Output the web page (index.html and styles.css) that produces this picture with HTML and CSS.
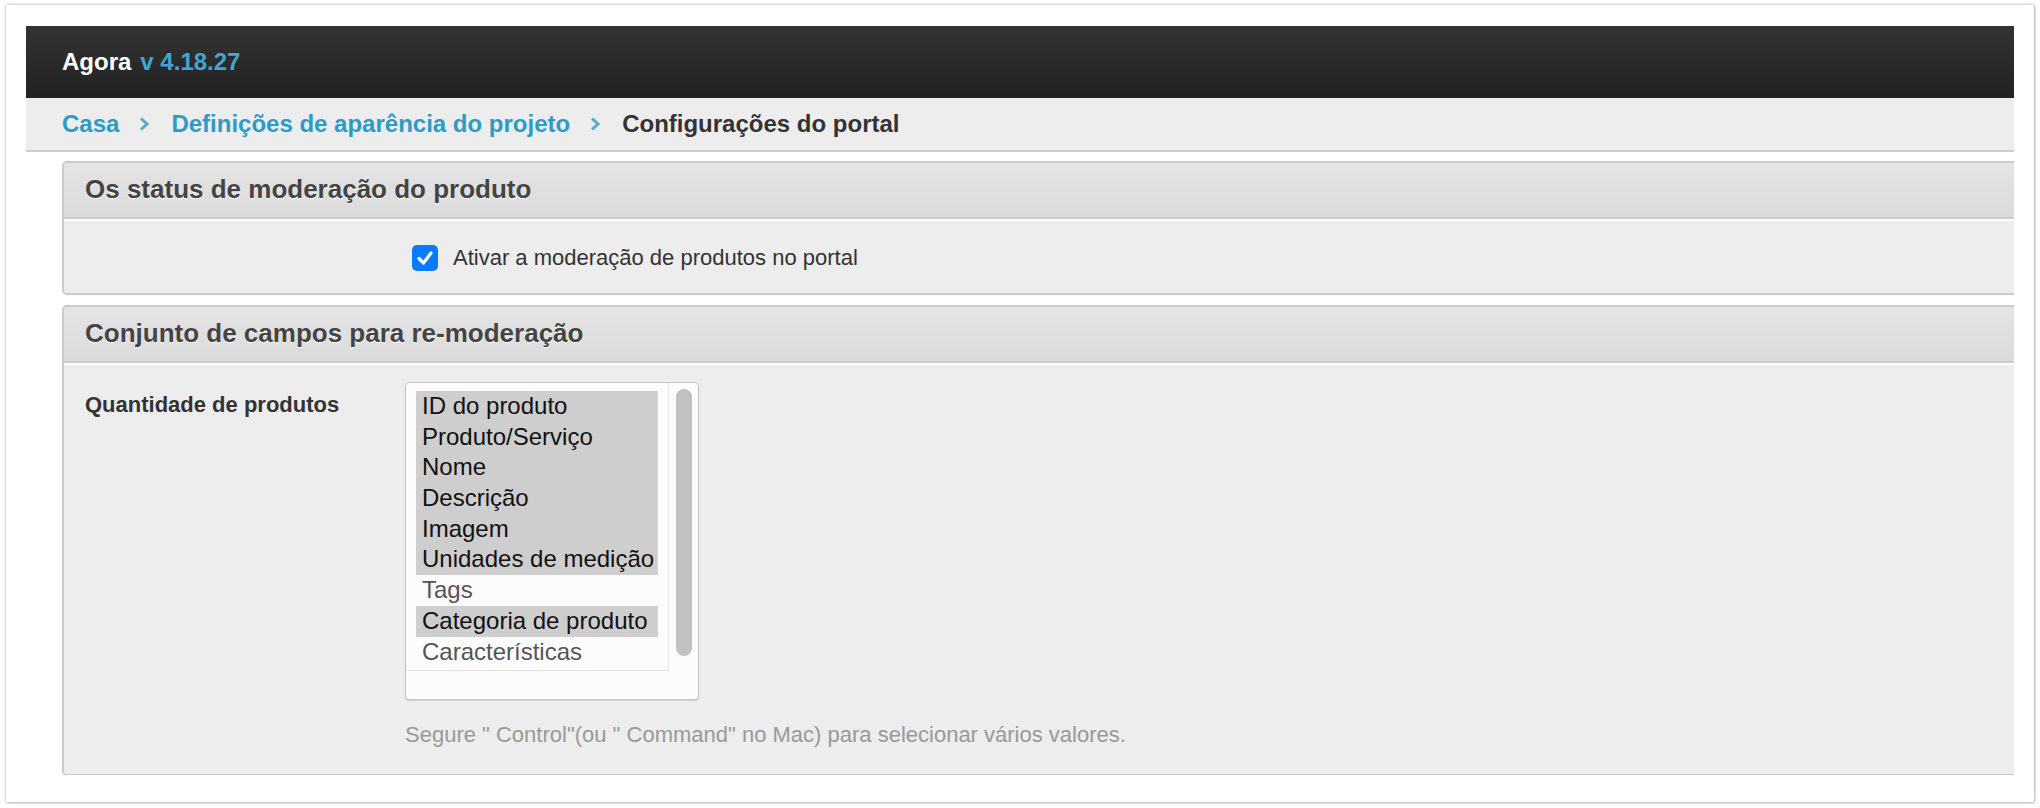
FILE: index.html
```html
<!DOCTYPE html>
<html lang="pt">
<head>
    <meta charset="UTF-8">
    <title>Configurações do portal</title>
    <link rel="stylesheet" href="styles.css">
</head>
<body>
    <div class="frame">
        <div class="app">
            <div class="topbar">
                <span class="brand">Agora</span>
                <span class="version">v 4.18.27</span>
            </div>

            <div class="breadcrumbs">
                <a href="#">Casa</a>
                <svg class="chevron" viewBox="0 0 10 14"><polyline points="2,1.5 8,7 2,12.5"/></svg>
                <a href="#">Definições de aparência do projeto</a>
                <svg class="chevron" viewBox="0 0 10 14"><polyline points="2,1.5 8,7 2,12.5"/></svg>
                <span class="current">Configurações do portal</span>
            </div>

            <div class="content">
                <div class="panel">
                    <div class="panel-head">Os status de moderação do produto</div>
                    <div class="panel-body check-row">
                        <div class="field-label"></div>
                        <label class="check">
                            <span class="box">
                                <svg viewBox="0 0 26 26"><polyline points="7,13.5 11.5,18 19,8"/></svg>
                            </span>
                            Ativar a moderação de produtos no portal
                        </label>
                    </div>
                </div>

                <div class="panel">
                    <div class="panel-head">Conjunto de campos para re-moderação</div>
                    <div class="panel-body">
                        <div class="field">
                            <div class="field-label bold">Quantidade de produtos</div>
                            <div class="field-control">
                                <div class="multi-select">
                                    <div class="options">
                                        <div class="option selected">ID do produto</div>
                                        <div class="option selected">Produto/Serviço</div>
                                        <div class="option selected">Nome</div>
                                        <div class="option selected">Descrição</div>
                                        <div class="option selected">Imagem</div>
                                        <div class="option selected">Unidades de medição</div>
                                        <div class="option">Tags</div>
                                        <div class="option selected">Categoria de produto</div>
                                        <div class="option">Características</div>
                                    </div>
                                    <div class="scroll"><div class="thumb"></div></div>
                                </div>
                            </div>
                        </div>
                        <p class="help">Segure " Control"(ou " Command" no Mac) para selecionar vários valores.</p>
                    </div>
                </div>
            </div>
        </div>
    </div>
</body>
</html>
```

FILE: styles.css
```css
body {
    margin: 0;
    background: #fff;
    font-family: "Liberation Sans", Arial, Helvetica, sans-serif;
    color: #333;
}

.frame {
    margin: 5px 6px 6px 6px;
    height: 797px;
    box-sizing: border-box;
    padding: 21px 20px 0 20px;
    background: #fff;
    box-shadow: 0 0 3px rgba(0, 0, 0, 0.35), 1px 1px 2px rgba(0, 0, 0, 0.15);
}

.app {
    height: 749px;
    overflow: hidden;
}

/* top dark bar */
.topbar {
    height: 72px;
    background: linear-gradient(#333333, #222222);
    display: flex;
    align-items: center;
    padding-left: 36px;
    padding-bottom: 1px;
    box-sizing: border-box;
    font-size: 24px;
    font-weight: bold;
}

.brand {
    color: #fff;
    margin-right: 9px;
}

.version {
    color: #41a6cf;
}

/* breadcrumbs */
.breadcrumbs {
    height: 52px;
    background: #ededed;
    border-bottom: 2px solid #cccccc;
    display: flex;
    align-items: center;
    padding-left: 36px;
    font-size: 24px;
    font-weight: bold;
}

.breadcrumbs a {
    color: #2c9bc6;
    text-decoration: none;
}

.breadcrumbs .current {
    color: #333;
}

.chevron {
    width: 10px;
    height: 14px;
    margin: 0 22px 0 20px;
    fill: none;
    stroke: #5aaacb;
    stroke-width: 3;
}

/* panels */
.content {
    padding: 9px 0 0 36px;
}

.panel {
    margin-right: -20px;
    margin-bottom: 10px;
    border: 2px solid #cbcbcb;
    border-radius: 5px;
    overflow: hidden;
}

.panel-head {
    height: 56px;
    display: flex;
    align-items: center;
    padding-left: 21px;
    padding-bottom: 1px;
    box-sizing: border-box;
    background: linear-gradient(#e4e4e4, #dbdbdb);
    border-bottom: 2px solid #cbcbcb;
    font-size: 26px;
    font-weight: bold;
    color: #444;
    text-shadow: 0 1px 0 #fff;
}

.panel-body {
    background: #ededed;
    border-top: 2px solid #fff;
}

.check-row {
    height: 72px;
    display: flex;
    align-items: center;
}

.field-label {
    width: 341px;
    flex-shrink: 0;
}

.check {
    display: flex;
    align-items: center;
    font-size: 22px;
    color: #333;
    margin-left: 7px;
    padding-top: 2px;
}

.check .box {
    width: 26px;
    height: 26px;
    border-radius: 5px;
    background: #0a7aff;
    margin-right: 15px;
}

.check .box svg {
    width: 26px;
    height: 26px;
    fill: none;
    stroke: #fff;
    stroke-width: 3.2;
    stroke-linecap: round;
    stroke-linejoin: round;
}

.field {
    display: flex;
    padding: 17px 0 0 0;
}

.field .field-label {
    padding-left: 21px;
    padding-top: 10px;
    width: 320px;
    font-size: 22px;
    color: #333;
}

.bold {
    font-weight: bold;
}

/* multiple select */
.multi-select {
    width: 294px;
    height: 318px;
    box-sizing: border-box;
    border: 1px solid #c4c4c4;
    border-radius: 4px;
    background: #fcfcfc;
    display: flex;
    align-items: flex-start;
    box-shadow: 0 1px 1px rgba(0, 0, 0, 0.12);
}

.options {
    width: 263px;
    height: 288px;
    box-sizing: border-box;
    padding: 8px 10px 0 10px;
    border-right: 1px solid #e4e4e4;
    border-bottom: 1px solid #e4e4e4;
}

.option {
    height: 30.7px;
    line-height: 30.7px;
    padding-left: 6px;
    font-size: 24px;
    color: #555;
    white-space: nowrap;
}

.option.selected {
    background: #cecece;
    color: #111;
}

.scroll {
    padding: 6px 6px 0 7px;
}

.thumb {
    width: 16px;
    height: 267px;
    border-radius: 8px;
    background: #c1c1c1;
}

.help {
    margin: 0;
    padding: 22px 0 26px 341px;
    font-size: 22px;
    color: #999;
}
```
